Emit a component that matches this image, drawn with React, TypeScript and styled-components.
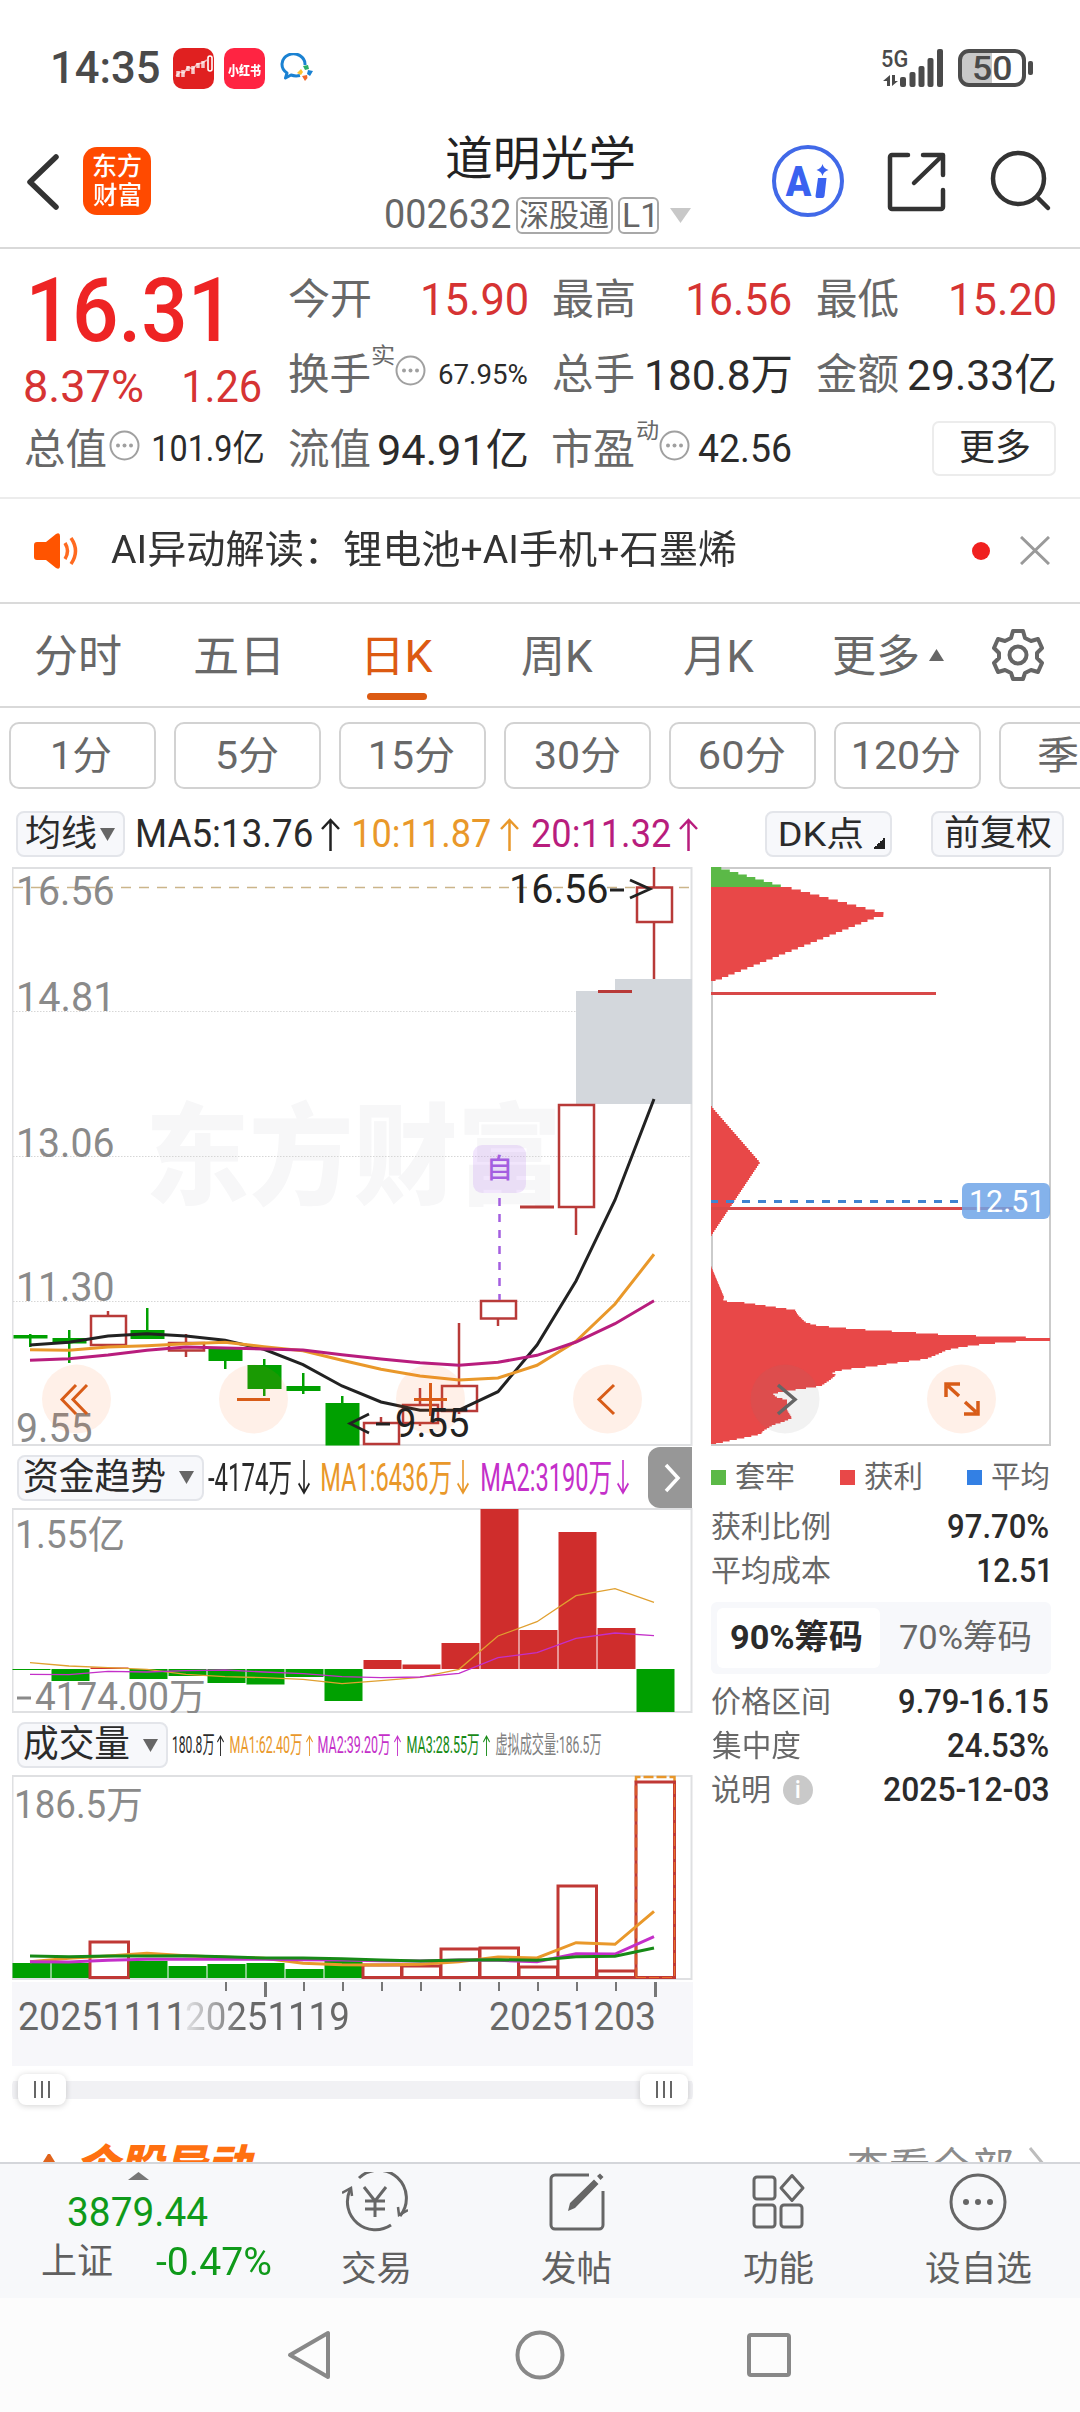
import React from "react";
import styled, { createGlobalStyle } from "styled-components";

const FONT = 'Roboto, "Noto Sans CJK SC", sans-serif';

const Global = createGlobalStyle`
  * { box-sizing: border-box; }
  body { margin: 0; background: #fff; font-family: ${FONT}; }
`;

/* ---------- text that is condensed or stretched to a given ink width ---------- */

let ctx: CanvasRenderingContext2D | null = null;
const measure = (text: string, size: number, weight: number, italic = false) => {
  if (!ctx) ctx = document.createElement("canvas").getContext("2d");
  ctx!.font = `${italic ? "italic " : ""}${weight} ${size}px ${FONT}`;
  const m = ctx!.measureText(text);
  return { left: -m.actualBoundingBoxLeft, ink: m.actualBoundingBoxLeft + m.actualBoundingBoxRight };
};

const FitBox = styled.span<{ $w: number; $h: number; $ml: number; $mt?: number }>`
  display: block;
  flex: none;
  width: ${(p) => p.$w}px;
  height: ${(p) => p.$h}px;
  margin-left: ${(p) => p.$ml}px;
  ${(p) => (p.$mt !== undefined ? `align-self: flex-start; margin-top: ${p.$mt}px;` : "")}
`;
const FitInk = styled.span<{ $size: number; $h: number; $color: string; $weight: number; $italic?: boolean }>`
  display: inline-block;
  white-space: pre;
  transform-origin: 0 50%;
  font-size: ${(p) => p.$size}px;
  line-height: ${(p) => p.$h}px;
  color: ${(p) => p.$color};
  font-weight: ${(p) => p.$weight};
  font-style: ${(p) => (p.$italic ? "italic" : "normal")};
`;

type TextProps = {
  children: string; w: number; s: number; c?: string; wt?: number;
  ml?: number; mt?: number; h?: number; italic?: boolean;
};
const Text = ({ children, w, s, c = "#2b2b2b", wt = 400, ml = 0, mt, h, italic }: TextProps) => {
  const height = h ?? Math.round(s * 1.2);
  const { left, ink } = measure(children, s, wt, italic);
  const k = w / ink;
  return (
    <FitBox $w={w} $h={height} $ml={ml} $mt={mt}>
      <FitInk $size={s} $h={height} $color={c} $weight={wt} $italic={italic}
        style={{ transform: `translateX(${-left * k}px) scaleX(${k})` }}>
        {children}
      </FitInk>
    </FitBox>
  );
};

/* The same for labels drawn inside a chart; y is the baseline. */
const Label = ({ x, y, w, s, c = "#8a8a8a", wt = 400, children, opacity }: {
  x: number; y: number; w: number; s: number; c?: string; wt?: number; children: string; opacity?: number;
}) => {
  const { left, ink } = measure(children, s, wt);
  const k = w / ink;
  return (
    <text transform={`translate(${x - left * k} ${y}) scale(${k} 1)`} fontSize={s} fontWeight={wt}
      fontFamily={FONT} fill={c} opacity={opacity}>{children}</text>
  );
};

/* ---------- page frame ---------- */

const Page = styled.div`
  width: 1080px;
  height: 2412px;
  overflow: hidden;
  display: flex;
  flex-direction: column;
  background: #fff;
`;
const Bar = styled.div<{ $h: number; $line?: string; $pl?: number; $pt?: number }>`
  flex: none;
  display: flex;
  align-items: center;
  height: ${(p) => p.$h}px;
  padding-left: ${(p) => p.$pl ?? 0}px;
  padding-top: ${(p) => p.$pt ?? 0}px;
  border-bottom: ${(p) => (p.$line ? `2px solid ${p.$line}` : "0")};
`;
const Icon = styled.svg<{ $ml?: number; $mt?: number }>`
  display: block;
  flex: none;
  fill: none;
  margin-left: ${(p) => p.$ml ?? 0}px;
  ${(p) => (p.$mt !== undefined ? `align-self: flex-start; margin-top: ${p.$mt}px;` : "")}
`;
const Spacer = styled.div<{ $w?: number }>`flex: ${(p) => (p.$w ? `0 0 ${p.$w}px` : "1")};`;
const Col = styled.div<{ $w: number; $ml?: number }>`
  flex: none;
  width: ${(p) => p.$w}px;
  margin-left: ${(p) => p.$ml ?? 0}px;
  display: flex;
  flex-direction: column;
`;

/* ---------- status bar and header ---------- */

const AppBadge = styled.div<{ $bg: string; $ml: number }>`
  flex: none;
  width: 41px;
  height: 41px;
  border-radius: 10px;
  margin-left: ${(p) => p.$ml}px;
  background: ${(p) => p.$bg};
  display: flex;
  align-items: center;
  justify-content: center;
`;
const Battery = styled.div`
  flex: none;
  width: 68px;
  height: 38px;
  margin-left: 15px;
  border: 4px solid #4c4c4c;
  border-radius: 11px;
  background: linear-gradient(90deg, #c8c8c8 50%, #fff 50%);
  display: flex;
  align-items: center;
  justify-content: center;
`;
const BatteryTip = styled.div`
  width: 5px;
  height: 14px;
  margin: 0 47px 0 2px;
  border-radius: 2px;
  background: #4c4c4c;
`;

const StatusBar = () => (
  <Bar $h={136} $pl={53}>
    <Text w={106} s={45} c="#4a4a4a" wt={500} h={52}>14:35</Text>
    <AppBadge $bg="#e02020" $ml={14}>
      <Icon width="41" height="41" viewBox="0 0 41 41" stroke="#fff">
        <path d="M3 28l4-4 4 1 4-6 5 2 4-5 5-1 5-3" strokeWidth="1.500" opacity=".6" />
        <path d="M5 23v6M10 22v7M15 18v5M20 18v8M25 15v5M30 13v7" strokeWidth="3.500" opacity=".75" />
        <rect x="35" y="8" width="4" height="15" rx="2" strokeWidth="1.600" />
      </Icon>
    </AppBadge>
    <AppBadge $bg="#ff2442" $ml={10}><Text w={33} s={13} c="#fff" wt={900}>小红书</Text></AppBadge>
    <Icon $ml={15} width="34" height="30" viewBox="0 0 34 30">
      <path d="M25 12A11.500 10.500 0 1 0 7 20l-1.500 5 5.500-3q4 1.500 9 .5" stroke="#1b82d2" strokeWidth="3" strokeLinejoin="round" />
      <path d="M24 12l3.500 1 1 4-4-1zM31 17l1 3-3 2.500-2-3zM25 27l-3-1-.5-3 4-.5zM18 21l1-3.500 3-.5v4z" strokeWidth="1.500" />
      <path d="M23 13l5-1 1 4-4 1z" fill="#2aae67" /><path d="M28 17l5 1-3 5-3-2z" fill="#1b82d2" />
      <path d="M22 23l5-1 .5 3-2.500 3z" fill="#f2672a" /><path d="M17 20l4-4 2 3-2 3z" fill="#fdc12d" />
    </Icon>
    <Spacer />
    <Text w={25} s={24} c="#4a4a4a" wt={500} mt={44} h={30}>5G</Text>
    <Icon $ml={-25} width="61" height="38" viewBox="0 0 61 38">
      <g fill="#4a4a4a">
        <path d="M5 26v11h3V26l-7 6h4zM10 37V26h3v6h3z" />
        <rect x="18" y="28" width="6" height="10" rx="2" /><rect x="27.500" y="23" width="6" height="15" rx="2" />
        <rect x="36.500" y="17" width="6" height="21" rx="2" /><rect x="45.500" y="9" width="6" height="29" rx="2" />
        <rect x="55" y="0" width="6" height="38" rx="2" />
      </g>
    </Icon>
    <Battery><Text w={37} s={34} c="#4a4a4a" wt={500} h={30}>50</Text></Battery>
    <BatteryTip />
  </Bar>
);

const Logo = styled.div`
  flex: none;
  width: 68px;
  height: 68px;
  margin: 11px 0 0 24px;
  align-self: flex-start;
  border-radius: 14px;
  background: #ff4a00;
  display: flex;
  flex-direction: column;
  align-items: center;
  justify-content: center;
`;
const TitleBlock = styled.div`
  flex: none;
  width: 310px;
  margin-left: 234px;
  align-self: flex-start;
`;
const Line = styled.div<{ $h: number; $mt?: number }>`
  display: flex;
  align-items: center;
  height: ${(p) => p.$h}px;
  margin-top: ${(p) => p.$mt ?? 0}px;
`;
const Tag = styled.div<{ $w: number; $ml: number }>`
  flex: none;
  width: ${(p) => p.$w}px;
  height: 37px;
  margin-left: ${(p) => p.$ml}px;
  border: 2px solid #a8a8a8;
  border-radius: 6px;
  display: flex;
  align-items: center;
  justify-content: center;
`;
const AiRing = styled.div`
  flex: none;
  width: 72px;
  height: 72px;
  margin: 9px 0 0 77px;
  align-self: flex-start;
  border: 4px solid #4169e8;
  border-radius: 50%;
  display: flex;
  align-items: center;
  padding-left: 9px;
`;

const Header = () => (
  <Bar $h={113} $line="#d9d9d9" $pl={26}>
    <Icon $mt={17} width="33" height="58" viewBox="0 0 33 58">
      <path d="M30 4L4 29l26 25" stroke="#333" strokeWidth="5.500" strokeLinecap="round" strokeLinejoin="round" />
    </Icon>
    <Logo>
      <Text w={48} s={25} c="#fff" wt={500} h={29}>东方</Text>
      <Text w={48} s={25} c="#fff" wt={500} h={30}>财富</Text>
    </Logo>
    <TitleBlock>
      <Line $h={46}><Text w={188} s={47} c="#222" ml={61}>道明光学</Text></Line>
      <Line $h={46} $mt={10}>
        <Text w={124} s={40} c="#666" ml={1}>002632</Text>
        <Tag $w={97} $ml={6}><Text w={89} s={31} c="#666">深股通</Text></Tag>
        <Tag $w={41} $ml={5}><Text w={29} s={34} c="#666">L1</Text></Tag>
        <Icon $ml={11} width="21" height="15" viewBox="0 0 21 15"><path d="M0 0h21L10.500 15z" fill="#c8c8c8" /></Icon>
      </Line>
    </TitleBlock>
    <AiRing>
      <Text w={27} s={43} c="#3a62f0" wt={900} h={64}>A</Text>
      <Icon $ml={3} width="14" height="34" viewBox="0 0 14 34">
        <path d="M3 14h8.500l-2 18q-.5 2-2 2H2q-1.500 0-1.500-2zM7.500 0q1 4.500 6 6-5 1.500-6 6-1-4.500-6-6 5-1.500 6-6z" fill="#3a62f0" />
      </Icon>
    </AiRing>
    <Icon $ml={41} $mt={14} width="62" height="64" viewBox="0 0 62 64" stroke="#333" strokeWidth="4.500" strokeLinecap="round" strokeLinejoin="round">
      <path d="M23 5H7a2 2 0 0 0-2 2v50a2 2 0 0 0 2 2h49a2 2 0 0 0 2-2V40" />
      <path d="M38 5h20v20M57 6L29 33" />
    </Icon>
    <Icon $ml={41} $mt={14} width="64" height="64" viewBox="0 0 64 64" stroke="#333" strokeWidth="4.500" strokeLinecap="round">
      <circle cx="30.500" cy="28.500" r="25.500" /><path d="M49 47l11 11" />
    </Icon>
  </Bar>
);

/* ---------- quote panel ---------- */

const Quote = styled.div`
  flex: none;
  height: 250px;
  padding: 13px 0 0 25px;
  border-bottom: 2px solid #ececec;
  display: grid;
  grid-template-columns: repeat(4, 238px);
  grid-template-rows: repeat(3, 75px);
  column-gap: 26px;
`;
const PriceCell = styled.div`
  grid-row: 1 / span 2;
  display: flex;
  flex-direction: column;
`;
const Cell = styled.div`
  display: flex;
  align-items: center;
`;
const MoreButton = styled.div`
  width: 124px;
  height: 55px;
  margin: 0 -1px 2px auto;
  border: 2px solid #ececec;
  border-radius: 7px;
  display: flex;
  align-items: center;
  justify-content: center;
`;
const Dots = ({ ml }: { ml: number }) => (
  <Icon $ml={ml} $mt={18} width="31" height="31" viewBox="0 0 31 31">
    <circle cx="15.500" cy="15.500" r="14" stroke="#a0a0a0" strokeWidth="2" />
    <g fill="#a0a0a0"><circle cx="9" cy="15.500" r="2" /><circle cx="15.500" cy="15.500" r="2" /><circle cx="22" cy="15.500" r="2" /></g>
  </Icon>
);
const Key = ({ children }: { children: string }) => <Text w={81} s={42} c="#686868">{children}</Text>;
const RED = "#d63333";

const QuotePanel = () => (
  <Quote>
    <PriceCell>
      <Text w={187} s={89} c="#ee2424" wt={500} ml={7} mt={7} h={84}>16.31</Text>
      <Line $h={44} $mt={12}>
        <Text w={117} s={45} c={RED}>8.37%</Text>
        <Text w={77} s={45} c={RED} ml={42}>1.26</Text>
      </Line>
    </PriceCell>
    <Cell><Key>今开</Key><Spacer /><Text w={104} s={45} c={RED}>15.90</Text></Cell>
    <Cell><Key>最高</Key><Spacer /><Text w={103} s={45} c={RED}>16.56</Text></Cell>
    <Cell><Key>最低</Key><Spacer /><Text w={104} s={45} c={RED}>15.20</Text></Cell>
    <Cell>
      <Key>换手</Key><Text w={22} s={22} c="#686868" ml={2} mt={6}>实</Text><Dots ml={1} />
      <Spacer /><Text w={88} s={27}>67.95%</Text>
    </Cell>
    <Cell><Key>总手</Key><Spacer /><Text w={144} s={43}>180.8万</Text></Cell>
    <Cell><Key>金额</Key><Spacer /><Text w={147} s={43}>29.33亿</Text></Cell>
    <Cell><Key>总值</Key><Dots ml={3} /><Spacer /><Text w={109} s={36}>101.9亿</Text></Cell>
    <Cell><Key>流值</Key><Spacer /><Text w={148} s={43}>94.91亿</Text></Cell>
    <Cell>
      <Key>市盈</Key><Text w={21} s={22} c="#686868" ml={3} mt={6}>动</Text><Dots ml={1} />
      <Spacer /><Text w={92} s={39}>42.56</Text>
    </Cell>
    <Cell><MoreButton><Text w={69} s={36}>更多</Text></MoreButton></Cell>
  </Quote>
);

/* ---------- notice, tabs, period pills ---------- */

const RedDot = styled.div`
  width: 18px;
  height: 18px;
  border-radius: 50%;
  background: #f0201f;
`;

const Notice = () => (
  <Bar $h={105} $line="#dadada" $pl={34}>
    <Icon width="46" height="36" viewBox="0 0 46 36">
      <path d="M0 12q0-3 3-3h9L22 1q4-2 4 2v30q0 4-4 2l-10-8H3q-3 0-3-3z" fill="#ff5400" />
      <path d="M31 10q5 8 0 16M37 5q9 13 0 26" stroke="#ff6a20" strokeWidth="3.500" />
    </Icon>
    <Text w={625} s={39} c="#333" ml={31}>AI异动解读：锂电池+AI手机+石墨烯</Text>
    <Spacer />
    <RedDot />
    <Icon $ml={30} width="30" height="29" viewBox="0 0 30 29"><path d="M1 1l28 27M29 1L1 28" stroke="#9a9a9a" strokeWidth="3" /></Icon>
    <Spacer $w={30} />
  </Bar>
);

const Tab = styled.div<{ $ml: number }>`
  flex: none;
  height: 102px;
  margin-left: ${(p) => p.$ml}px;
  display: flex;
  flex-direction: column;
  align-items: flex-start;
  padding-top: 27px;
`;
const Underline = styled.div`
  width: 60px;
  height: 7px;
  margin-top: 10px;
  border-radius: 4px;
  background: #dc5a12;
`;
const tabs: [string, number, number][] = [
  ["分时", 86, 35], ["五日", 83, 74], ["日K", 66, 89], ["周K", 71, 89], ["月K", 70, 91], ["更多", 84, 80],
];
const Tabs = () => (
  <Bar $h={104} $line="#d9d9d9">
    {tabs.map(([name, w, ml], i) => (
      <Tab key={name} $ml={ml}>
        <Text w={w} s={44} h={52} c={i === 2 ? "#dc5a12" : "#686868"}>{name}</Text>
        {i === 2 && <Underline />}
      </Tab>
    ))}
    <Icon $ml={11} width="15" height="12" viewBox="0 0 15 12"><path d="M0 12h15L7.500 0z" fill="#666" /></Icon>
    <Icon $ml={48} width="52" height="52" viewBox="0 0 52 52" stroke="#666" strokeWidth="4" strokeLinejoin="round">
      <path d="M21 2h10l2 7 6 3 7-2 4 9-5 5v5l5 5-4 9-7-2-6 3-2 6H21l-2-6-6-3-7 2-4-9 5-5v-5l-5-5 4-9 7 2 6-3z" />
      <circle cx="26" cy="26" r="8.500" />
    </Icon>
  </Bar>
);

const Pills = styled.div`
  flex: none;
  height: 88px;
  display: flex;
  gap: 18.500px;
  padding: 14px 0 0 9px;
  overflow: hidden;
`;
const Pill = styled.div`
  flex: none;
  width: 146.500px;
  height: 67px;
  padding-top: 2px;
  border: 2px solid #d2d2d2;
  border-radius: 10px;
  display: flex;
  align-items: center;
  justify-content: center;
`;
const periods: [string, number][] = [["1分", 58], ["5分", 61], ["15分", 83], ["30分", 85], ["60分", 85], ["120分", 106], ["季K", 68]];

/* ---------- chart toolbar and indicator rows ---------- */

const Chip = styled.div<{ $w: number; $ml: number; $pl: number }>`
  flex: none;
  width: ${(p) => p.$w}px;
  height: 46px;
  margin-left: ${(p) => p.$ml}px;
  padding-left: ${(p) => p.$pl}px;
  border: 2px solid #e3e5ea;
  border-radius: 8px;
  background: #f7f8fb;
  display: flex;
  align-items: center;
`;
const Caret = ({ ml }: { ml: number }) => (
  <Icon $ml={ml} width="15" height="13" viewBox="0 0 15 13"><path d="M0 0h15L7.500 13z" fill="#666" /></Icon>
);
const Corner = styled.div`
  width: 12px;
  height: 12px;
  margin: 18px 0 0 10px;
  background: linear-gradient(135deg, transparent 50%, #222 50%);
`;
const ORANGE = "#e9982a";
const MAGENTA = "#b81d7d";
const VIOLET = "#c42fc9";
const GREEN = "#00a000";
const CANDLE = "#b83a38";

const Arrow = ({ c, up, ml, w = 19, h = 33 }: { c: string; up?: boolean; ml: number; w?: number; h?: number }) => (
  <Icon $ml={ml} width={w} height={h} viewBox="0 0 19 33" preserveAspectRatio="none">
    <path d={up ? "M9.500 33V2M1 11l8.500-9 8.500 9" : "M9.500 0v31M1 22l8.500 9 8.500-9"} stroke={c} strokeWidth="2.500" />
  </Icon>
);

const ChartToolbar = () => (
  <Bar $h={71} $pt={5}>
    <Chip $w={109} $ml={16} $pl={8}><Text w={70} s={36}>均线</Text><Caret ml={4} /></Chip>
    <Text w={174} s={38} ml={13}>MA5:13.76</Text><Arrow c="#222" up ml={9} />
    <Text w={136} s={38} c={ORANGE} ml={14}>10:11.87</Text><Arrow c={ORANGE} up ml={10} />
    <Text w={138} s={38} c={MAGENTA} ml={13}>20:11.32</Text><Arrow c={MAGENTA} up ml={9} />
    <Spacer />
    <Chip $w={127} $ml={0} $pl={13}><Text w={83} s={34}>DK点</Text><Corner /></Chip>
    <Chip $w={133} $ml={39} $pl={12}><Text w={106} s={35}>前复权</Text></Chip>
    <Spacer $w={16} />
  </Bar>
);

const ExpandTab = styled.div`
  width: 44px;
  height: 61px;
  margin: 0 1px 0 auto;
  border-radius: 12px 0 0 12px;
  background: #979797;
  display: flex;
  align-items: center;
  justify-content: center;
`;

/* ---------- charts (drawn in page coordinates) ---------- */

const Plot = styled.svg`
  display: block;
  flex: none;
`;
const cx = (i: number) => 30 + i * 39;
const poly = (vals: number[], f: (v: number) => number) => vals.map((v, i) => `${cx(i)},${f(v).toFixed(1)}`).join(" ");

// [kind, body top, body bottom, high, low]
const candles: [string, number, number, number, number][] = [
  ["g", 1335, 1338.5, 1334, 1347], ["g", 1338, 1343.500, 1330, 1363], ["r", 1316, 1345, 1311, 1316],
  ["g", 1330, 1339, 1308, 1339], ["r", 1343, 1350.500, 1334, 1357], ["g", 1349, 1361, 1349, 1369],
  ["g", 1365, 1389, 1359, 1396], ["g", 1386, 1391, 1373, 1394], ["g", 1403, 1445.500, 1396, 1403],
  ["r", 1423, 1444, 1417, 1423], ["r", 1405, 1423, 1388, 1426], ["r", 1386, 1411, 1323, 1414],
  ["r", 1301, 1318.500, 1301, 1326], ["l", 1207, 1207, 0, 0], ["r", 1105, 1207, 1105, 1235],
  ["l", 991.500, 991.500, 0, 0], ["r", 887.500, 922, 867, 979],
];
const ma5 = [615, 607, 588, 581, 588, 601, 628, 674, 738, 786, 811, 810, 755, 615, 423, 180, -123];
const ma10 = [629, 631, 621, 617, 611, 607, 620, 632, 661, 688, 708, 720, 714, 676, 604, 492, 343];
const ma20 = [661, 656, 645, 631, 621, 624, 627, 630, 644, 657, 668, 676, 667, 646, 606, 551, 482];

const Round = ({ x, children, grey }: { x: number; children: React.ReactNode; grey?: boolean }) => (
  <g>
    <circle cx={x} cy="1399" r="34.500" fill={grey ? "#808080" : "#ff6a1e"} opacity=".1" />
    <g stroke={grey ? "#666" : "#d85c18"} strokeWidth="3" fill="none">{children}</g>
  </g>
);

const KLine = () => (
  <Plot width="681" height="579" viewBox="12 867 681 579">
    <rect x="12.500" y="868" width="679" height="577" fill="#fff" stroke="#dfe0e2" strokeWidth="2" />
    <Label x={150} y={1196} w={405} s={110} wt={900} c="#f7f7f8">东方财富</Label>
    {[1011.500, 1156.500, 1301.500].map((y) => <path key={y} d={`M13 ${y}H691`} stroke="#d6d6d6" strokeDasharray="1.500 1.500" />)}
    <path d="M576 991h39v-12h77v125H576z" fill="#d3d7dc" />
    <path d="M13 887.500H691" stroke="#cbb58a" strokeWidth="1.500" strokeDasharray="10 8" />
    {[["16.56", 19, 905, 94], ["14.81", 19, 1011, 89], ["13.06", 19, 1157, 94], ["11.30", 19, 1301, 94], ["9.55", 17, 1442, 74]].map(
      ([t, x, y, w]) => <Label key={t} x={+x} y={+y} w={+w} s={40}>{String(t)}</Label>
    )}
    {candles.map(([k, t, b, hi, lo], i) => {
      const x = cx(i);
      if (k === "l") return <path key={i} d={`M${x - 17} ${t}h34`} stroke={CANDLE} strokeWidth="3" />;
      if (k === "g")
        return <g key={i} fill={GREEN}><rect x={x - 16.500} y={t} width="34" height={b - t} /><rect x={x - 1} y={hi} width="2.500" height={lo - hi} /></g>;
      return (
        <g key={i} stroke={CANDLE} strokeWidth="2.500" fill="none">
          <path d={`M${x} ${hi}V${t}M${x} ${b}V${Math.max(lo, b)}`} />
          <rect x={x - 17} y={t} width="35" height={b - t} />
        </g>
      );
    })}
    <g fill="none" strokeWidth="3">
      <polyline points={poly(ma5, (v) => 1140 + v / 3)} stroke="#222" />
      <polyline points={poly(ma10, (v) => 1140 + v / 3)} stroke={ORANGE} />
      <polyline points={poly(ma20, (v) => 1140 + v / 3)} stroke={MAGENTA} />
    </g>
    <rect x="473" y="1145" width="53" height="48" rx="9" fill="#b77df0" opacity=".2" />
    <Label x={490} y={1178} w={20} s={27} c="#a45fe0" wt={500}>自</Label>
    <path d="M499.500 1198V1300" stroke="#a45fe0" strokeWidth="2.500" strokeDasharray="8 8" />
    <Label x={512} y={902.500} w={95} s={40} c="#222">16.56</Label>
    <path d="M610 890h14M630 880l20 9-20 9" stroke="#222" strokeWidth="2.800" fill="none" />
    <Round x={76.500}><path d="M76 1385l-14 14.500 14 14.500M87 1385l-14 14.500 14 14.500" /></Round>
    <Round x={253.500}><path d="M237 1399.500h33" /></Round>
    <Round x={430.500}><path d="M414 1399.500h33M430.500 1383v33" /></Round>
    <Round x={607.500}><path d="M614 1385l-15 14.500 15 14.500" /></Round>
    <path d="M369 1414l-19 9.500 19 9.500M376 1424h14" stroke="#222" strokeWidth="2.800" fill="none" />
    <Label x={396} y={1437} w={72} s={40} c="#222">9.55</Label>
  </Plot>
);

// Cost distribution: [y, width] corner points measured from the top left of the panel.
type Pt = [number, number];
const bands: Pt[][] = [
  [[20, 76], [46, 172], [48, 176], [50, 166], [114, 4]],
  [[239, 0], [295.500, 49], [369, 0]],
  [[399, 0], [430, 13], [434, 12], [435, 28], [437.500, 46], [440, 63], [443, 84], [448, 87], [455, 94], [458, 103], [460, 120],
    [462.500, 150], [465, 194], [468, 238], [470, 310], [471.500, 339], [473.500, 339], [475, 298], [477.500, 270], [480, 251], [483, 236],
    [488, 225], [492, 215], [494.500, 196], [497, 177], [499.500, 162], [501.500, 142], [504, 126], [506, 121], [508, 125], [513, 119],
    [519, 110], [522, 90], [524.500, 72], [527, 62], [530, 65], [533, 76], [543, 76], [551, 81], [555, 72], [558, 62], [564, 52], [567, 50],
    [570, 37], [573, 22], [577, 4]],
];
const widthAt = (pts: Pt[], y: number) => {
  for (let i = 1; i < pts.length; i++)
    if (y <= pts[i][0]) {
      const [a, wa] = pts[i - 1];
      const [b, wb] = pts[i];
      return wa + ((wb - wa) * (y - a)) / (b - a);
    }
  return 0;
};
const steps = (pts: Pt[], unit: number) => {
  let d = `M0 ${pts[0][0]}`;
  const end = pts[pts.length - 1][0];
  for (let y = pts[0][0]; y < end; y += unit) d += `H${widthAt(pts, Math.min(y + unit / 2, end)).toFixed(1)}V${Math.min(y + unit, end)}`;
  return d + "H0z";
};

const CostChart = () => (
  <Plot width="340" height="579" viewBox="0 0 340 579">
    <rect x="1" y="1" width="338" height="577" fill="#fff" stroke="#cbcbcb" strokeWidth="2" />
    <path d={steps([[0, 6], [20, 74]], 2.500)} fill="#5bb947" />
    <path d={steps(bands[0], 2.500)} fill="#e84848" />
    <path d={steps(bands[1], 2)} fill="#e84848" />
    <path d={steps(bands[2], 1.500)} fill="#e84848" />
    <path d="M0 126.500H225M0 341.500H302" stroke="#d84848" strokeWidth="3" />
    <path d="M0 334.500H252" stroke="#3f83d0" strokeWidth="3" strokeDasharray="8 8" strokeDashoffset="1" />
    <rect x="251" y="316" width="88" height="36" rx="6" fill="#6ea4e8" opacity=".85" />
    <Label x={260} y={345} w={69} s={31} c="#fff">12.51</Label>
    <g transform="translate(-711 -867)">
      <Round x={785} grey><path d="M778 1385l17 14.500-17 14.500" strokeWidth="3.500" /></Round>
      <Round x={961.500}>
        <path d="M946 1397v-13h14M948 1386l11 10M978 1401v13h-14M976 1412l-11-10" strokeWidth="3.500" />
      </Round>
    </g>
  </Plot>
);

const fund: [number, number][] = [
  [1669, 1670], [1669, 1681], [1667.500, 1669], [1669, 1679], [1669, 1676], [1669, 1683], [1669, 1684.500], [1669, 1677], [1669, 1701],
  [1660, 1669], [1664.500, 1669], [1643, 1669], [1509, 1669], [1630, 1669], [1532, 1669], [1628, 1669], [1669, 1712],
];
const fundRed = [2, 9, 10, 11, 12, 13, 14, 15];
const fund1 = [668, 678, 683, 688, 703, 710, 713, 718, 731, 722, 712, 688, 588, 545, 467, 446, 487];
const fund2 = [703, 704, 694, 696, 692, 690, 696, 701, 710, 713, 711, 700, 653, 638, 595, 579, 587];

const FundChart = () => (
  <Plot width="681" height="205" viewBox="12 1508 681 205">
    <rect x="12.500" y="1509" width="679" height="203" fill="#fff" stroke="#dfe0e2" strokeWidth="2" />
    {fund.map(([t, b], i) => (
      <rect key={i} x={12.500 + i * 39} y={t} width="38" height={b - t} fill={fundRed.includes(i) ? "#cf2d2c" : GREEN} />
    ))}
    <Label x={18} y={1548} w={105} s={38}>1.55亿</Label>
    <path d="M17 1698h14" stroke="#8a8a8a" strokeWidth="3" />
    <Label x={35} y={1710} w={169} s={38}>4174.00万</Label>
    <g fill="none" strokeWidth="1.300">
      <polyline points={poly(fund1, (v) => 1440 + v / 3)} stroke="#e0a030" />
      <polyline points={poly(fund2, (v) => 1440 + v / 3)} stroke={VIOLET} />
    </g>
  </Plot>
);

const volTop = [1963, 1963, 1942, 1961, 1966, 1964, 1963, 1969, 1961, 1965, 1966, 1949, 1948, 1967, 1886, 1971, 1782];
const volRed = (i: number) => i === 2 || i > 8;
const vol1 = [755, 745, 738, 730, 737, 742, 745, 760, 764, 765, 763, 755, 741, 744, 698, 703, 604];
const vol2 = [755, 756, 751, 748, 748, 748, 748, 749, 750, 752, 753, 750, 751, 755, 731, 732, 680];
const vol3 = [738, 740, 738, 738, 737, 740, 744, 744, 746, 750, 753, 750, 749, 751, 740, 739, 714];

const VolumeChart = () => (
  <Plot width="681" height="205" viewBox="12 1775 681 205">
    <rect x="12.500" y="1776" width="679" height="203" fill="#fff" stroke="#dfe0e2" strokeWidth="2" />
    <Label x={17} y={1818} w={124} s={38}>186.5万</Label>
    <path d="M636 1977.500V1777H674.500V1977.500" fill="none" stroke="#e8962a" strokeWidth="2.500" strokeDasharray="10 3" />
    {volTop.map((t, i) =>
      volRed(i)
        ? <rect key={i} x={12 + i * 39} y={t} width="38.500" height={1977.500 - t} fill="none" stroke="#c03835" strokeWidth="3" />
        : <rect key={i} x={12.500 + i * 39} y={t} width="38" height={1978 - t} fill={GREEN} />
    )}
    <path d="M636 1977.500V1784M674.500 1784V1977.500M636 1977.500h38" fill="none" stroke="#e8702a" strokeWidth="1.200" strokeDasharray="10 3" />
    <g fill="none" strokeWidth="3">
      <polyline points={poly(vol1, (v) => 1710 + v / 3)} stroke={ORANGE} />
      <polyline points={poly(vol2, (v) => 1710 + v / 3)} stroke={VIOLET} />
      <polyline points={poly(vol3, (v) => 1710 + v / 3)} stroke="#178a17" />
    </g>
  </Plot>
);

const Axis = styled.div`
  flex: none;
  width: 681px;
  height: 84px;
  margin-top: 2px;
  background: #f7f7fa;
`;
const Ticks = styled.div`
  display: flex;
  gap: 37px;
  height: 17px;
  padding-left: 213px;
`;
const Tick = styled.div<{ $major: boolean }>`
  flex: none;
  width: 2px;
  height: ${(p) => (p.$major ? 15 : 9)}px;
  background: #777;
  box-shadow: ${(p) => (p.$major ? "1px 0 0 #777" : "none")};
`;
const Fade = styled.div`
  margin-left: 7px;
  mask-image: linear-gradient(90deg, rgba(0, 0, 0, 0.15) 0, #000 56px);
`;

/* ---------- range slider ---------- */

const Slider = styled.div`
  flex: none;
  width: 681px;
  height: 32px;
  margin-top: 8px;
  padding: 0 5px 0 6px;
  display: flex;
  justify-content: space-between;
  background: linear-gradient(#f1f1f4, #f1f1f4) 0 7px / 100% 18px no-repeat;
  border-radius: 12px;
`;
const Handle = styled.div`
  width: 48px;
  height: 31px;
  border-radius: 8px;
  background: #fff;
  box-shadow: 0 1px 6px rgba(0, 0, 0, 0.18);
  display: flex;
  align-items: center;
  justify-content: center;
  gap: 5px;
`;
const Grip = styled.div`
  width: 2px;
  height: 17px;
  background: #666;
`;

/* ---------- right side panel ---------- */

const Legend = styled.div`
  flex: none;
  height: 60px;
  display: flex;
  align-items: center;
  justify-content: space-between;
  padding: 2px 3px 0 0;
`;
const LegendItem = styled.div`
  display: flex;
  align-items: center;
  gap: 10px;
`;
const Swatch = styled.div<{ $c: string }>`
  width: 15px;
  height: 15px;
  background: ${(p) => p.$c};
`;
const InfoRow = styled.div`
  flex: none;
  height: 44px;
  display: flex;
  align-items: center;
  padding: 0 3px 0 1px;
`;
const InfoBadge = styled.div`
  width: 30px;
  height: 30px;
  margin-left: 14px;
  border-radius: 50%;
  background: #c9c9c9;
  display: flex;
  align-items: center;
  justify-content: center;
`;
const Segmented = styled.div`
  flex: none;
  height: 72px;
  margin: 8px 0 7px;
  padding: 6px;
  border-radius: 6px;
  background: #f7f8fb;
  display: flex;
`;
const Segment = styled.div<{ $on?: boolean }>`
  flex: 1;
  border-radius: 6px;
  padding: ${(p) => (p.$on ? "0 3px 2px 0" : "0 0 2px 6px")};
  background: ${(p) => (p.$on ? "#fff" : "transparent")};
  display: flex;
  align-items: center;
  justify-content: center;
`;
const Info = ({ k, kw, v, vw, badge }: { k: string; kw: number; v: string; vw: number; badge?: boolean }) => (
  <InfoRow>
    <Text w={kw} s={30} c="#686868" h={38}>{k}</Text>
    {badge && <InfoBadge><Text w={4} s={24} c="#fff" wt={700}>i</Text></InfoBadge>}
    <Spacer />
    <Text w={vw} s={33} wt={500}>{v}</Text>
  </InfoRow>
);
const InfoList = styled.div<{ $up: number }>`
  margin-top: -${(p) => p.$up}px;
  margin-bottom: ${(p) => p.$up}px;
`;

/* ---------- next section, bottom bars ---------- */

const Body = styled.div`
  flex: none;
  display: flex;
  height: 1240px;
  padding-left: 12px;
`;
const Section = styled.div`
  flex: none;
  display: flex;
  align-items: flex-start;
  height: 55px;
  padding-left: 39px;
  overflow: hidden;
`;
const BottomBar = styled.div`
  flex: none;
  height: 136px;
  border-top: 2px solid #d4d6da;
  background: #f7f8fa;
  display: flex;
`;
const IndexBox = styled.div`
  flex: none;
  width: 275px;
  display: flex;
  flex-direction: column;
`;
const Action = styled.div<{ $w: number }>`
  flex: none;
  width: ${(p) => p.$w}px;
  padding-top: 8px;
  display: flex;
  flex-direction: column;
  align-items: center;
  gap: 17px;
`;
const SystemNav = styled.div`
  flex: none;
  height: 114px;
  background: #fcfcfc;
  display: flex;
  align-items: center;
  padding-left: 286px;
`;

const App = () => (
  <Page>
    <Global />
    <StatusBar />
    <Header />
    <QuotePanel />
    <Notice />
    <Tabs />
    <Pills>
      {periods.map(([t, w]) => <Pill key={t}><Text w={w} s={39} c="#686868">{t}</Text></Pill>)}
    </Pills>
    <ChartToolbar />
    <Body>
      <Col $w={681}>
        <KLine />
        <Bar $h={62} $pt={1}>
          <Chip $w={187} $ml={5} $pl={5}><Text w={141} s={37}>资金趋势</Text><Caret ml={14} /></Chip>
          <Text w={83} s={38} ml={4}>-4174万</Text><Arrow c="#222" ml={7} w={12} h={35} />
          <Text w={129} s={38} c={ORANGE} ml={12}>MA1:6436万</Text><Arrow c={ORANGE} ml={6} w={12} h={35} />
          <Text w={129} s={38} c={VIOLET} ml={13}>MA2:3190万</Text><Arrow c={VIOLET} ml={6} w={12} h={35} />
          <ExpandTab>
            <Icon $ml={4} width="17" height="30" viewBox="0 0 17 30"><path d="M2 2l12 13L2 28" stroke="#fff" strokeWidth="3.500" /></Icon>
          </ExpandTab>
        </Bar>
        <FundChart />
        <Bar $h={62} $pt={2}>
          <Chip $w={151} $ml={5} $pl={5}><Text w={105} s={37}>成交量</Text><Caret ml={14} /></Chip>
          <Text w={41} s={24} ml={5}>180.8万</Text><Arrow c="#222" up ml={3} w={7} h={21} />
          <Text w={72} s={24} c={ORANGE} ml={6}>MA1:62.40万</Text><Arrow c={ORANGE} up ml={4} w={7} h={21} />
          <Text w={72} s={24} c={VIOLET} ml={5}>MA2:39.20万</Text><Arrow c={VIOLET} up ml={4} w={7} h={21} />
          <Text w={72} s={24} c="#178a17" ml={6}>MA3:28.55万</Text><Arrow c="#178a17" up ml={4} w={7} h={21} />
          <Text w={105} s={24} c="#808080" ml={6}>虚拟成交量:186.5万</Text>
        </Bar>
        <VolumeChart />
        <Axis>
          <Ticks>{Array.from({ length: 12 }, (_, i) => <Tick key={i} $major={i === 1 || i === 11} />)}</Ticks>
          <Line $h={36}>
            <Text w={160} s={39} c="#686868" ml={7}>20251111</Text>
            <Fade><Text w={162} s={39} c="#686868">20251119</Text></Fade>
            <Text w={164} s={39} c="#686868" ml={142}>20251203</Text>
          </Line>
        </Axis>
        <Slider>
          <Handle><Grip /><Grip /><Grip /></Handle>
          <Handle><Grip /><Grip /><Grip /></Handle>
        </Slider>
      </Col>
      <Col $w={340} $ml={18}>
        <CostChart />
        <Legend>
          <LegendItem><Swatch $c="#5bb947" /><Text w={58} s={30} c="#686868">套牢</Text></LegendItem>
          <LegendItem><Swatch $c="#e84848" /><Text w={56} s={30} c="#686868">获利</Text></LegendItem>
          <LegendItem><Swatch $c="#3380e4" /><Text w={56} s={30} c="#686868">平均</Text></LegendItem>
        </Legend>
        <InfoList $up={1}>
          <Info k="获利比例" kw={117} v="97.70%" vw={100} />
          <Info k="平均成本" kw={118} v="12.51" vw={70} />
        </InfoList>
        <Segmented>
          <Segment $on><Text w={131} s={34} wt={700}>90%筹码</Text></Segment>
          <Segment><Text w={130} s={34} c="#686868">70%筹码</Text></Segment>
        </Segmented>
        <InfoList $up={1}>
          <Info k="价格区间" kw={117} v="9.79-16.15" vw={149} />
          <Info k="集中度" kw={88} v="24.53%" vw={100} />
          <Info k="说明" kw={57} v="2025-12-03" vw={164} badge />
        </InfoList>
      </Col>
    </Body>
    <Section>
      <Icon $mt={47} width="22" height="16" viewBox="0 0 22 16"><path d="M2 16l8-13 8 13" stroke="#e0641c" strokeWidth="5" /></Icon>
      <Text w={175} s={44} c="#ff7010" wt={900} italic ml={20} mt={29} h={60}>个股异动</Text>
      <Text w={164} s={43} c="#8c8c8c" ml={592} mt={34} h={56}>查看全部</Text>
      <Icon $ml={16} $mt={39} width="20" height="40" viewBox="0 0 20 40"><path d="M2 2l14 17L2 36" stroke="#bdbdbd" strokeWidth="3" /></Icon>
    </Section>
    <BottomBar>
      <IndexBox>
        <Icon $ml={128} $mt={8} width="21" height="8" viewBox="0 0 21 8"><path d="M0 8h21L10.500 0z" fill="#777" /></Icon>
        <Text w={140} s={41} c="#0f9a1a" ml={68} mt={7} h={50}>3879.44</Text>
        <Line $h={44} $mt={3}>
          <Text w={70} s={36} c="#606060" ml={42}>上证</Text>
          <Text w={115} s={38} c="#0f9a1a" ml={44}>-0.47%</Text>
        </Line>
      </IndexBox>
      <Action $w={200}>
        <Icon width="66" height="60" viewBox="0 0 66 60" stroke="#666" strokeWidth="3">
          <path d="M17 6a28 28 0 0 1 41 38M49 53A28 28 0 0 1 8 18" />
          <path d="M0 21l9-5 1 8M66 38l-9 5-1-8" strokeWidth="2.500" />
          <path d="M22 15l11 14 11-14M33 29v16M23 29h20M23 37h20" />
        </Icon>
        <Text w={67} s={35} c="#606060">交易</Text>
      </Action>
      <Action $w={203}>
        <Icon width="56" height="60" viewBox="0 0 56 60" stroke="#666" strokeWidth="3">
          <path d="M40 3H6a4 4 0 0 0-4 4v46a4 4 0 0 0 4 4h44a4 4 0 0 0 4-4V19" />
          <path d="M45 7.500l4.500 4.500L26 36l-7 3 2-8zM48 4l3-2.500 3.500 3.500-3 3z" fill="#666" stroke="none" />
        </Icon>
        <Text w={69} s={35} c="#606060">发帖</Text>
      </Action>
      <Action $w={200}>
        <Icon width="54" height="60" viewBox="0 0 54 60" stroke="#666" strokeWidth="3">
          <rect x="3" y="5" width="21" height="22" rx="3" /><rect x="3" y="33" width="21" height="22" rx="3" />
          <rect x="30" y="33" width="21" height="22" rx="3" />
          <path d="M41 3.500L52 16 41 28.500 30 16z" strokeLinejoin="round" />
        </Icon>
        <Text w={69} s={35} c="#606060">功能</Text>
      </Action>
      <Action $w={200}>
        <Icon width="60" height="60" viewBox="0 0 60 60" stroke="#666" strokeWidth="3">
          <circle cx="30" cy="30" r="27" />
          <g fill="#666" stroke="none"><circle cx="18" cy="30" r="3" /><circle cx="30" cy="30" r="3" /><circle cx="42" cy="30" r="3" /></g>
        </Icon>
        <Text w={105} s={35} c="#606060">设自选</Text>
      </Action>
    </BottomBar>
    <SystemNav>
      <Icon width="46" height="54" viewBox="0 0 46 54"><path d="M42 5v44L4 27z" stroke="#888" strokeWidth="4" strokeLinejoin="round" /></Icon>
      <Icon $ml={182} width="52" height="52" viewBox="0 0 52 52"><circle cx="26" cy="26" r="22.500" stroke="#888" strokeWidth="4" /></Icon>
      <Icon $ml={180} width="46" height="46" viewBox="0 0 46 46"><rect x="3" y="3" width="40" height="40" rx="2" stroke="#888" strokeWidth="4" /></Icon>
    </SystemNav>
  </Page>
);

export default App;
